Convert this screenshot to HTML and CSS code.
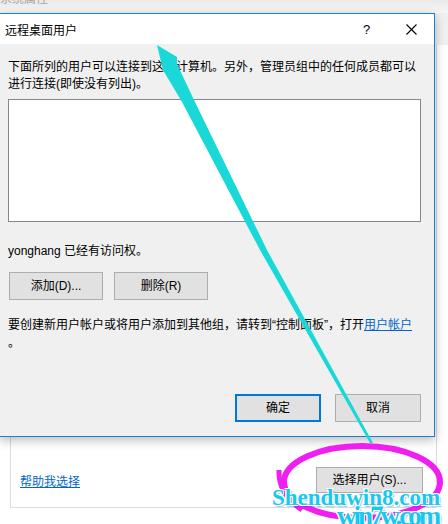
FILE: index.html
```html
<!DOCTYPE html>
<html lang="zh-CN">
<head>
<meta charset="utf-8">
<title>远程桌面用户</title>
<link rel="stylesheet" href="styles.css">
</head>
<body>
<div class="desk">
  <div class="parent">
    <div class="parent-title"><span>系统属性</span></div>
    <div class="parent-tabs"></div>
    <div class="parent-panel">
      <div class="group">
        <div class="group-row">
          <a class="link" href="#">帮助我选择</a>
          <button class="btn btn-select">选择用户(S)...</button>
        </div>
      </div>
    </div>
  </div>

  <div class="dialog">
    <div class="titlebar">
      <span class="title">远程桌面用户</span>
      <div class="caption-btns">
        <span class="cap cap-help">?</span>
        <span class="cap cap-close">
          <svg width="11" height="11" viewBox="0 0 11 11"><path d="M0.5 0.5 L10.5 10.5 M10.5 0.5 L0.5 10.5" stroke="#000" stroke-width="1.1" fill="none"/></svg>
        </span>
      </div>
    </div>
    <div class="body">
      <p class="intro">下面所列的用户可以连接到这台计算机。另外，管理员组中的任何成员都可以进行连接(即使没有列出)。</p>
      <div class="listbox"></div>
      <p class="access">yonghang 已经有访问权。</p>
      <div class="btn-row">
        <button class="btn btn-wide">添加(D)...</button>
        <button class="btn btn-wide">删除(R)</button>
      </div>
      <p class="note">要创建新用户帐户或将用户添加到其他组，请转到“控制面板”，打开<a class="link" href="#">用户帐户</a>。</p>
      <div class="footer">
        <button class="btn btn-ok">确定</button>
        <button class="btn btn-cancel">取消</button>
      </div>
    </div>
  </div>

  <svg class="annot" width="448" height="524" viewBox="0 0 448 524">
    <ellipse cx="362" cy="482" rx="78" ry="36" fill="none" stroke="#f01ef0" stroke-width="6"/>
    <path d="M279 470 Q278 494 302 510" fill="none" stroke="#f01ef0" stroke-width="5"/>
    <polygon points="157,45 177,57 177,64 195,102 267,250 373,443 370,443 260,250 182,102 163,70" fill="#18d8d8"/>
  </svg>
  <div class="wm wm2">win7w.com</div>
  <div class="wm wm1">Shenduwin8.com</div>
</div>
</body>
</html>
```
FILE: styles.css
```css
* { box-sizing: border-box; }

html, body {
  margin: 0;
  padding: 0;
  background: #ffffff;
}

body {
  font-family: "Liberation Sans", "Noto Sans CJK SC", sans-serif;
  font-size: 12px;
  color: #000;
}

.desk {
  position: relative;
  width: 448px;
  height: 524px;
  overflow: hidden;
  background: #ffffff;
}

/* parent window behind the dialog */
.parent-title {
  height: 13px;
  overflow: hidden;
  background: linear-gradient(#e9e9e9, #f7f7f7);
  color: #8a8a8a;
}
.parent-title span {
  display: block;
  margin-top: -9px;
  line-height: 17px;
  opacity: 0.7;
}

.parent-tabs {
  height: 32px;
  background: #f0f0f0;
}

.parent-panel {
  padding-left: 10px;
  padding-right: 11px;
  background: #ffffff;
}

.group {
  height: 463px;
  border: 1px solid #dcdcdc;
  display: flex;
  flex-direction: column;
  justify-content: flex-end;
  padding: 0 13px 14px 9px;
}

.group-row {
  display: flex;
  align-items: center;
  justify-content: space-between;
}

.link {
  color: #0066cc;
  text-decoration: underline;
}

.btn {
  font-family: "Liberation Sans", "Noto Sans CJK SC", sans-serif;
  font-size: 12px;
  color: #000;
  background: #e1e1e1;
  border: 1px solid #adadad;
  padding: 0;
  margin: 0;
  line-height: 1;
}

.btn-select {
  width: 107px;
  height: 26px;
}

/* dialog */
.dialog {
  position: absolute;
  left: -1px;
  top: 13px;
  width: 436px;
  height: 424px;
  border: 1px solid #1a7fd4;
  background: #f0f0f0;
  box-shadow: 0 3px 10px rgba(0, 0, 0, 0.28);
  display: flex;
  flex-direction: column;
}

.titlebar {
  height: 30px;
  background: #ffffff;
  display: flex;
  align-items: center;
  justify-content: space-between;
  flex: none;
}

.title {
  padding-left: 5px;
  font-size: 12px;
}

.caption-btns {
  display: flex;
  height: 30px;
}

.cap {
  width: 45px;
  height: 30px;
  display: flex;
  align-items: center;
  justify-content: center;
}

.cap-help {
  font-size: 13px;
}

.body {
  flex: 1;
  display: flex;
  flex-direction: column;
  padding: 15px 13px 14px 8px;
}

.intro {
  margin: 0;
  line-height: 17px;
}

.listbox {
  margin-top: 6px;
  height: 123px;
  border: 1px solid #828790;
  background: #ffffff;
  flex: none;
}

.access {
  margin: 21px 0 0 0;
  line-height: 17px;
}

.btn-row {
  margin-top: 12px;
  margin-left: 1px;
  display: flex;
  gap: 11px;
}

.btn-wide {
  width: 94px;
  height: 28px;
}

.note {
  margin: 16px 0 0 0;
  line-height: 18px;
  line-break: anywhere;
}

.footer {
  margin-top: auto;
  display: flex;
  justify-content: flex-end;
  gap: 14px;
}

.btn-ok,
.btn-cancel {
  width: 86px;
  height: 28px;
}

.btn-ok {
  border: 2px solid #0078d7;
}

/* annotations */
.annot {
  position: absolute;
  left: 0;
  top: 0;
  pointer-events: none;
}

.wm {
  position: absolute;
  font-family: "Liberation Serif", serif;
  font-weight: bold;
  color: #17c8ef;
  white-space: nowrap;
  text-shadow: 1px 1px 0 #ffffff, -1px -1px 0 #ffffff, 1px -1px 0 #ffffff, -1px 1px 0 #ffffff, 2px 2px 1px rgba(0, 90, 180, 0.35);
}

.wm1 {
  left: 272px;
  top: 486px;
  font-size: 23px;
  line-height: 23px;
}

.wm2 {
  left: 337px;
  top: 503px;
  font-size: 27px;
  line-height: 27px;
  letter-spacing: -3px;
}
```
